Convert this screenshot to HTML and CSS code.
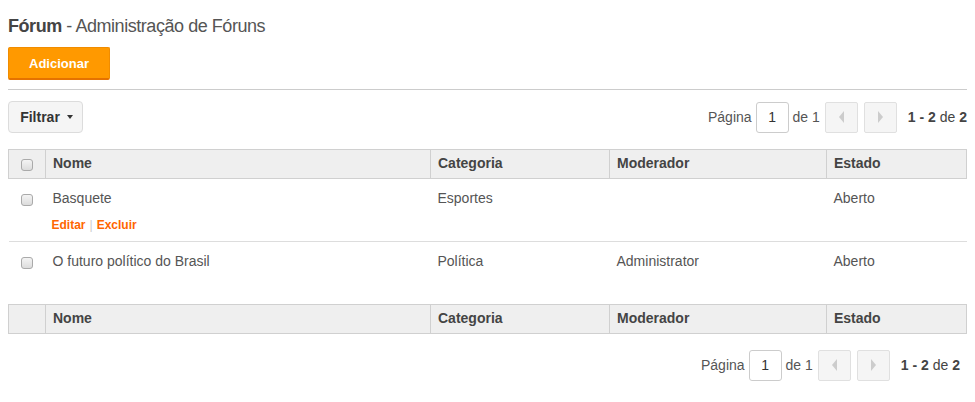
FILE: index.html
```html
<!DOCTYPE html>
<html lang="pt">
<head>
    <meta charset="UTF-8">
    <title>Fórum - Administração de Fóruns</title>
    <link rel="stylesheet" href="styles.css">
</head>
<body>

<h1 class="page-title"><strong>Fórum</strong> - Administração de Fóruns</h1>
<div class="actions-bar">
    <button class="btn-add">Adicionar</button>
</div>

<div class="toolbar">
    <button class="btn-filter">Filtrar <span class="caret"></span></button>
    <div class="pager">
        <span>Página</span>
        <input class="page-input" type="text" value="1">
        <span>de 1</span>
        <button class="pg-btn"><span class="tri tri-left"></span></button>
        <button class="pg-btn next"><span class="tri tri-right"></span></button>
        <span class="count"><b>1 - 2</b> de <b>2</b></span>
    </div>
</div>

<table class="grid">
    <colgroup>
        <col style="width:37px">
        <col style="width:385px">
        <col style="width:179px">
        <col style="width:217px">
        <col style="width:140px">
    </colgroup>
    <thead>
        <tr>
            <th class="chk"><span class="box"></span></th>
            <th>Nome</th>
            <th>Categoria</th>
            <th>Moderador</th>
            <th>Estado</th>
        </tr>
    </thead>
    <tbody>
        <tr class="first">
            <td class="chk"><span class="box"></span></td>
            <td>Basquete
                <div class="row-actions"><a href="#">Editar</a><span class="sep">|</span><a href="#">Excluir</a></div>
            </td>
            <td>Esportes</td>
            <td></td>
            <td>Aberto</td>
        </tr>
        <tr class="last">
            <td class="chk"><span class="box"></span></td>
            <td>O futuro político do Brasil
                <div class="row-actions hidden"><a href="#">Editar</a><span class="sep">|</span><a href="#">Excluir</a></div>
            </td>
            <td>Política</td>
            <td>Administrator</td>
            <td>Aberto</td>
        </tr>
    </tbody>
    <tfoot>
        <tr>
            <th class="chk"></th>
            <th>Nome</th>
            <th>Categoria</th>
            <th>Moderador</th>
            <th>Estado</th>
        </tr>
    </tfoot>
</table>

<div class="toolbar bottom">
    <div class="pager">
        <span>Página</span>
        <input class="page-input" type="text" value="1">
        <span>de 1</span>
        <button class="pg-btn"><span class="tri tri-left"></span></button>
        <button class="pg-btn next"><span class="tri tri-right"></span></button>
        <span class="count"><b>1 - 2</b> de <b>2</b></span>
    </div>
</div>

</body>
</html>
```

FILE: styles.css
```css
body {
    font-family: 'Liberation Sans', Arial, sans-serif;
    font-size: 14px;
    color: #555;
    margin: 0;
    padding: 0 8px;
    background: #fff;
}
.page-title {
    font-size: 18px;
    font-weight: normal;
    color: #555;
    margin: 0;
    padding-top: 15px;
    line-height: 22px;
    letter-spacing: -0.45px;
}
.page-title strong {
    color: #444;
}
.actions-bar {
    margin-top: 10px;
    padding-bottom: 9px;
    border-bottom: 1px solid #ccc;
}
.btn-add {
    display: block;
    width: 102px;
    height: 33px;
    background: #ff9900;
    border: 1px solid #f08c00;
    border-bottom: 2px solid #e57200;
    border-radius: 2px;
    color: #fff;
    font-family: inherit;
    font-weight: bold;
    font-size: 13px;
    padding: 0;
}
.toolbar {
    display: flex;
    align-items: center;
    justify-content: space-between;
    margin-top: 11px;
    height: 32px;
}
.toolbar.bottom {
    justify-content: flex-end;
    margin-top: 15px;
    padding-right: 7px;
}
.btn-filter {
    height: 32px;
    width: 75px;
    background: #f5f5f5;
    border: 1px solid #dcdcdc;
    border-radius: 4px;
    font-family: inherit;
    font-size: 14px;
    font-weight: bold;
    color: #333;
    padding: 0 0 0 2px;
    display: flex;
    align-items: center;
    justify-content: center;
    gap: 7px;
}
.caret {
    width: 0;
    height: 0;
    border-left: 3px solid transparent;
    border-right: 3px solid transparent;
    border-top: 4px solid #333;
}
.pager {
    display: flex;
    align-items: center;
    color: #555;
}
.page-input {
    width: 33px;
    height: 31px;
    box-sizing: border-box;
    border: 1px solid #ccc;
    border-radius: 3px;
    text-align: center;
    font-family: inherit;
    font-size: 14px;
    color: #333;
    margin: 0 4px;
    padding: 0;
}
.pg-btn {
    width: 33px;
    height: 31px;
    background: #f5f5f5;
    border: 1px solid #e0e0e0;
    border-radius: 2px;
    margin-left: 5px;
    padding: 0;
    display: flex;
    align-items: center;
    justify-content: center;
}
.pg-btn.next {
    margin-left: 6px;
}
.tri {
    width: 0;
    height: 0;
    border-top: 6px solid transparent;
    border-bottom: 6px solid transparent;
}
.tri-left {
    border-right: 5px solid #ccc;
}
.tri-right {
    border-left: 5px solid #ccc;
}
.count {
    margin-left: 11px;
    color: #444;
}
.count b {
    color: #444;
}
.grid {
    width: 958px;
    border-collapse: collapse;
    table-layout: fixed;
    margin-top: 16px;
}
.grid th {
    background: #efefef;
    border: 1px solid #d0d0d0;
    text-align: left;
    font-weight: bold;
    color: #444;
    padding: 0 7px 2px;
    height: 26px;
    line-height: 16px;
}
.grid td {
    padding: 10px 7px 0;
    vertical-align: top;
    color: #555;
    line-height: 18px;
    height: 51px;
}
.grid tr.first td {
    border-bottom: 1px solid #ddd;
}
.grid .chk {
    padding: 0;
    text-align: center;
}
.grid td.chk {
    padding-top: 11px;
}
.box {
    display: inline-block;
    width: 10px;
    height: 10px;
    border: 1px solid #aaa;
    border-radius: 3px;
    background: linear-gradient(#f4f4f4, #dcdcdc);
    vertical-align: middle;
}
.row-actions {
    margin-top: 9px;
    margin-left: -1px;
    font-size: 12px;
    font-weight: bold;
}
.row-actions a {
    color: #ff6600;
    text-decoration: none;
}
.row-actions .sep {
    color: #ccc;
    font-weight: normal;
    margin: 0 4px;
}
.hidden {
    visibility: hidden;
}
```
